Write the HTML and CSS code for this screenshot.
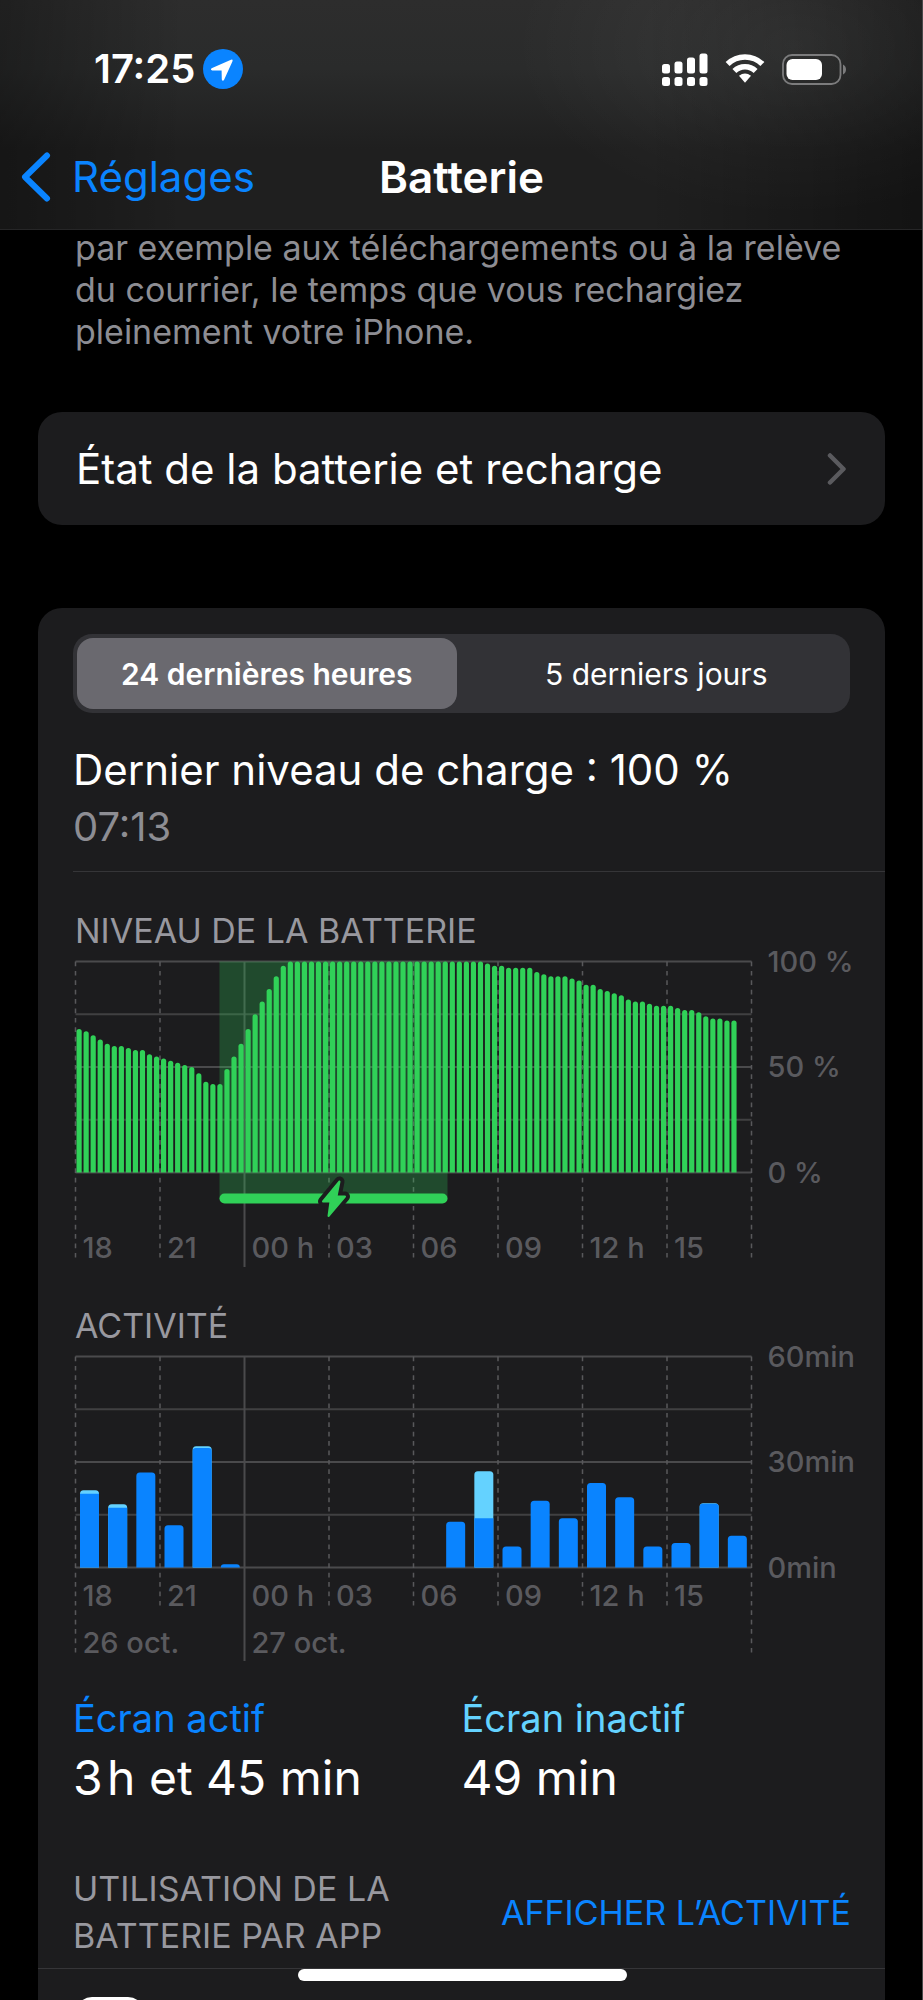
FILE: index.html
```html
<!DOCTYPE html>
<html lang="fr">
<head>
<meta charset="utf-8">
<meta name="viewport" content="width=device-width, initial-scale=1">
<title>Batterie</title>
<link rel="stylesheet" href="styles.css">
</head>
<body>
<header class="header">
  <div class="status">
    <div class="status-left">
      <span class="clock">17:25</span>
      <svg class="location" viewBox="0 0 40 40" aria-hidden="true">
        <circle cx="20" cy="20" r="20" fill="#0a84ff"/>
        <path d="M8.600 19.200 28 10.800q2.400-.8 1.400 1.600L21 31q-1.400 1.600-2.200-.6L18.600 21.600 9.200 21.400q-2.200-.8-.6-2.200z" fill="#fff"/>
      </svg>
    </div>
    <div class="status-right">
      <svg class="signal" viewBox="0 0 46 33" aria-hidden="true" fill="#fff">
        <rect x="0" y="11" width="8" height="9.500" rx="2.500"/>
        <rect x="12.500" y="8.500" width="8" height="12" rx="2.500"/>
        <rect x="25" y="4.500" width="8" height="16" rx="2.500"/>
        <rect x="37.500" y="0.500" width="8" height="20" rx="2.500"/>
        <rect x="0" y="24" width="8" height="9" rx="2.500"/>
        <rect x="12.500" y="24" width="8" height="9" rx="2.500"/>
        <rect x="25" y="24" width="8" height="9" rx="2.500"/>
        <rect x="37.500" y="24" width="8" height="9" rx="2.500"/>
      </svg>
      <svg class="wifi" viewBox="0 0 40 30" aria-hidden="true">
        <path d="M2.600 10A25 25 0 0 1 37.400 10M9.400 17.100A15.200 15.200 0 0 1 30.600 17.100" fill="none" stroke="#fff" stroke-width="5.600"/>
        <path d="M14 21.800Q20 17.400 26 21.800L20 28.800z" fill="#fff"/>
      </svg>
      <svg class="battery" viewBox="0 0 65 31" aria-hidden="true">
        <rect x="1" y="1" width="57.500" height="29" rx="9" fill="none" stroke="#7c7c7d" stroke-width="1.800"/>
        <rect x="4.500" y="5" width="35.500" height="21" rx="6" fill="#fff"/>
        <path d="M61 10.500q3 1.600 3 5t-3 5z" fill="#7c7c7d"/>
      </svg>
    </div>
  </div>
  <nav class="nav">
    <a class="back" href="#">
      <svg class="back-icon" viewBox="0 0 30 50" aria-hidden="true"><path d="M26 3.500 4 25 26 46.500" fill="none" stroke="#0a84ff" stroke-width="6" stroke-linecap="round" stroke-linejoin="round"/></svg>
      <span>Réglages</span>
    </a>
    <h1 class="title">Batterie</h1>
  </nav>
</header>

<main class="main">
  <p class="note">par exemple aux téléchargements ou à la relève du courrier, le temps que vous rechargiez pleinement votre iPhone.</p>

  <a class="card link-row" href="#">
    <span>État de la batterie et recharge</span>
    <svg class="chevron" viewBox="0 0 20 34" aria-hidden="true"><path d="M3 3.500 16.500 17 3 30.500" fill="none" stroke="#5a5a5e" stroke-width="4.500" stroke-linecap="round" stroke-linejoin="round"/></svg>
  </a>

  <section class="card panel">
    <div class="segmented">
      <button class="segment is-selected" type="button" aria-pressed="true">24 dernières heures</button>
      <button class="segment" type="button" aria-pressed="false">5 derniers jours</button>
    </div>
    <div class="last-charge">
      <p class="last-title">Dernier niveau de charge : 100 %</p>
      <p class="last-time">07:13</p>
    </div>

    <h2 class="caption level-caption">NIVEAU DE LA BATTERIE</h2>
    <svg id="level" class="chart" viewBox="0 0 812 319" role="img" aria-label="Niveau de la batterie"></svg>

    <h2 class="caption activity-caption">ACTIVITÉ</h2>
    <svg id="activity" class="chart" viewBox="0 0 812 318" role="img" aria-label="Activité"></svg>

    <div class="totals">
      <div>
        <p class="total-label on">Écran actif</p>
        <p class="total-value">3&#8202;h et 45 min</p>
      </div>
      <div>
        <p class="total-label off">Écran inactif</p>
        <p class="total-value">49 min</p>
      </div>
    </div>

    <div class="usage">
      <h2 class="caption usage-caption">UTILISATION DE LA BATTERIE PAR APP</h2>
      <button class="usage-toggle" type="button">AFFICHER L’ACTIVITÉ</button>
    </div>
    <div class="app-row"><span class="app-icon"></span></div>
  </section>
</main>
<div class="home-indicator"></div>
<script src="charts.js"></script>
</body>
</html>
```
FILE: charts.js
```
const NS = 'http://www.w3.org/2000/svg';
const X0 = 2.5, WIDTH = 676, HEIGHT = 211, STEP = WIDTH / 8;
const HOURS = ['18', '21', '00 h', '03', '06', '09', '12 h', '15'];

function add(parent, name, attrs, text) {
  const el = document.createElementNS(NS, name);
  for (const key in attrs) el.setAttribute(key, attrs[key]);
  if (text) el.textContent = text;
  parent.append(el);
}

function grid(svg, top, ends, hourBaseline, labels) {
  for (let i = 0; i <= 4; i++) {
    const y = top + HEIGHT * i / 4;
    add(svg, 'line', { x1: X0, x2: X0 + WIDTH, y1: y, y2: y, class: i % 2 ? 'grid-line minor' : 'grid-line' });
  }
  for (let i = 0; i <= 8; i++) {
    const x = X0 + STEP * i;
    const midnight = i === 2;
    const bottom = midnight ? ends.midnight : i % 8 === 0 ? ends.edge : ends.inner;
    add(svg, 'line', { x1: x, x2: x, y1: top, y2: bottom, class: midnight ? 'grid-line' : 'grid-line dashed' });
    if (i < 8) add(svg, 'text', { x: x + 7, y: hourBaseline, class: 'axis' }, HOURS[i]);
  }
  labels.forEach((label, i) => {
    add(svg, 'text', { x: X0 + WIDTH + 16, y: top + 10 + HEIGHT * i / 2, class: 'axis' }, label);
  });
}

function bar(svg, x, y, width, bottom, radius, cls) {
  const r = Math.min(radius, bottom - y);
  add(svg, 'path', {
    d: `M${x} ${bottom}V${y + r}q0-${r} ${r}-${r}h${width - 2 * r}q${r} 0 ${r} ${r}V${bottom}z`,
    class: cls
  });
}

const level = [
  68, 67, 65, 63, 61, 60, 60, 59, 58, 58, 56, 55, 54, 53, 52, 51, 50, 47, 43, 42, 42,
  49, 55, 61, 68, 75, 81, 87, 93, 98, ...Array(28).fill(100),
  99, 98, 98, 97, 97, 97, 97, 95, 94, 93, 93, 93, 92, 91, 89, 89, 87, 86, 85, 84, 82, 81,
  81, 80, 79, 79, 79, 78, 77, 77, 76, 74, 73, 73, 72, 72
];
const levelSvg = document.getElementById('level');
const levelTop = 10.5;
grid(levelSvg, levelTop, { inner: 311, edge: 311, midnight: 316 }, 307, ['100 %', '50 %', '0 %']);
add(levelSvg, 'rect', { x: 146.5, y: levelTop, width: 228, height: 238, class: 'charge-zone' });
level.forEach((value, i) => {
  bar(levelSvg, X0 + 1 + i * WIDTH / 96, levelTop + HEIGHT * (1 - value / 100), 5.2, levelTop + HEIGHT, 2.6, 'level-bar');
});
add(levelSvg, 'rect', { x: 146.5, y: 242.5, width: 228, height: 10, rx: 5, class: 'charge-track' });
const BOLT = 'M266.500 230.500 250 250.500H257.500L255.500 265 272 245.500H263.500z';
add(levelSvg, 'path', { d: BOLT, class: 'bolt-halo' });
add(levelSvg, 'path', { d: BOLT, class: 'bolt' });

// [hour slot, total minutes, minutes with the screen on]
const activity = [
  [0, 22, 21], [1, 18, 17], [2, 27, 27], [3, 12, 12], [4, 34.5, 34], [5, 0.9, 0.9],
  [13, 13, 13], [14, 27.4, 14], [15, 6, 6], [16, 19, 19], [17, 14, 14], [18, 24, 24],
  [19, 20, 20], [20, 6, 6], [21, 7, 7], [22, 18.3, 18.1], [23, 9, 9]
];
const activitySvg = document.getElementById('activity');
const activityTop = 10.5, activityBottom = activityTop + HEIGHT;
grid(activitySvg, activityTop, { inner: 264, edge: 311, midnight: 315 }, 260, ['60min', '30min', '0min']);
add(activitySvg, 'text', { x: X0 + 7, y: 307, class: 'axis' }, '26 oct.');
add(activitySvg, 'text', { x: X0 + STEP * 2 + 7, y: 307, class: 'axis' }, '27 oct.');
activity.forEach(([slot, total, on]) => {
  const x = X0 + 4.5 + slot * WIDTH / 24;
  const y = minutes => activityBottom - minutes * HEIGHT / 60;
  bar(activitySvg, x, y(total), 19, activityBottom, 3.5, total > on ? 'off-bar' : 'on-bar');
  if (total > on) bar(activitySvg, x, y(on), 19, activityBottom, total - on < 0.8 ? 3 : 0, 'on-bar');
});
```
FILE: styles.css
```css
* { box-sizing: border-box; }

body {
  margin: 0;
  background: #000;
  color: #fff;
  font-family: Inter, "Liberation Sans", sans-serif;
  border-right: 1px solid #48484a;
}

h1, h2, p { margin: 0; font-weight: 400; }
a { color: inherit; text-decoration: none; }
button { border: 0; background: none; padding: 0; font-family: inherit; color: inherit; }
svg { display: block; flex: none; }

.header {
  position: relative;
  z-index: 1;
  padding-bottom: 14px;
  border-bottom: 1px solid #262627;
  background:
    radial-gradient(280px 170px at 86% 20%, rgba(255, 255, 255, 0.06), transparent),
    linear-gradient(90deg, rgba(0, 0, 0, 0.3), transparent 20%, transparent 70%, rgba(0, 0, 0, 0.4)),
    linear-gradient(#2d2d2d, #2a2b2b 30%, #1f1f1f 65%, #1f1f1f);
}

.status {
  display: flex;
  align-items: center;
  justify-content: space-between;
  height: 138px;
  padding: 0 75px 0 94px;
}
.status-left { display: flex; align-items: center; gap: 8px; }
.clock { font-size: 40px; line-height: 48px; font-weight: 600; }
.location { width: 40px; height: 40px; }
.status-right { display: flex; align-items: center; gap: 17px; }
.signal { width: 46px; height: 33px; }
.wifi { width: 40px; height: 30px; }
.battery { width: 65px; height: 31px; }

.nav {
  display: grid;
  grid-template-columns: 1fr auto 1fr;
  align-items: center;
  height: 77px;
  padding: 0 20px 0 21px;
}
.back { display: flex; align-items: center; gap: 21px; color: #0a84ff; font-size: 42px; line-height: 50px; }
.back-icon { width: 30px; height: 50px; }
.title { font-size: 44px; line-height: 50px; font-weight: 600; }

.main { padding: 0 37px 0 38px; }

.note {
  margin: -3px 36px 59px 37px;
  color: #8d8d93;
  font-size: 34px;
  line-height: 42px;
}

.card { background: #1c1c1e; border-radius: 24px; }

.link-row {
  display: flex;
  align-items: center;
  justify-content: space-between;
  min-height: 113px;
  padding: 0 38px;
  margin-bottom: 83px;
  font-size: 42px;
  line-height: 50px;
}
.chevron { width: 20px; height: 34px; }

.panel { padding: 26px 0 0 35px; border-radius: 24px 24px 0 0; }

.segmented {
  display: grid;
  grid-template-columns: 1fr 1fr;
  gap: 10px;
  height: 79px;
  margin-right: 35px;
  padding: 4px;
  border-radius: 19px;
  background: #323236;
}
.segment { border-radius: 16px; font-size: 30px; line-height: 36px; font-weight: 400; }
.segment.is-selected { background: #6a696f; font-weight: 600; }

.last-charge { padding: 32px 0 19px; border-bottom: 1px solid #353538; }
.last-title { font-size: 42px; line-height: 50px; }
.last-time { margin-top: 7px; color: #8d8d93; font-size: 40px; line-height: 50px; }

.caption { color: #98989f; font-size: 34px; line-height: 40px; }
.level-caption { margin-top: 39px; padding-left: 2px; }
.activity-caption { margin-top: 36px; padding-left: 2px; }

.chart { width: 100%; height: auto; overflow: visible; }
.grid-line { stroke: #4a4a4c; stroke-width: 2; }
.grid-line.minor { stroke: #404042; }
.grid-line.dashed { stroke: #58585b; stroke-width: 1.5; stroke-dasharray: 4.7; }
.axis { fill: #5a5a5e; font-size: 29px; font-weight: 500; }
.charge-zone { fill: #30d158; fill-opacity: 0.26; }
.level-bar, .charge-track, .bolt { fill: #30d158; }
.bolt { stroke: #30d158; stroke-width: 2; stroke-linejoin: round; }
.bolt-halo { fill: #1c1c1e; stroke: #1c1c1e; stroke-width: 10; stroke-linejoin: round; }
.on-bar { fill: #0a84ff; }
.off-bar { fill: #64d2ff; }

.totals {
  display: grid;
  grid-template-columns: 1fr 1fr;
  margin: 31px 35px 0 0;
}
.total-label { font-size: 38px; line-height: 46px; }
.total-label.on { color: #0a84ff; }
.total-label.off { color: #64d2ff; }
.total-value { margin-top: 9px; font-size: 48px; line-height: 56px; }

.usage {
  display: flex;
  align-items: center;
  justify-content: space-between;
  gap: 60px;
  margin: 59px 0 0 -35px;
  padding: 0 34px 9px 35px;
  border-bottom: 1px solid #353538;
}
.usage-caption { line-height: 47px; }
.usage-toggle { flex: none; color: #0a84ff; font-size: 34px; line-height: 47px; }

.app-row { height: 31px; padding: 28px 0 0 3px; overflow: hidden; }
.app-icon { display: block; width: 68px; height: 68px; border-radius: 16px; background: #fff; }

.home-indicator {
  position: fixed;
  z-index: 2;
  left: 50%;
  bottom: 19px;
  width: 329px;
  height: 12px;
  margin-left: -164px;
  border-radius: 6px;
  background: #fff;
}
```
